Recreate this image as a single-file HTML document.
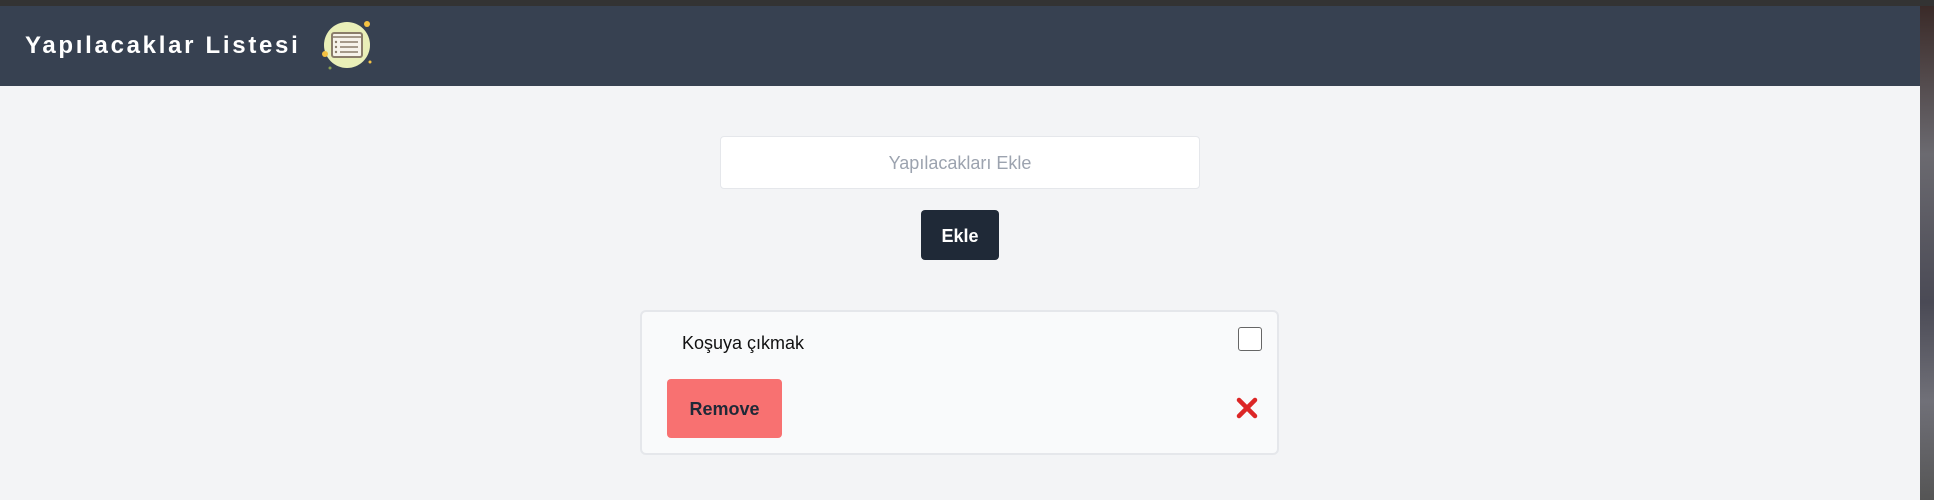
<!DOCTYPE html>
<html><head><meta charset="utf-8"><style>
*{box-sizing:border-box;margin:0;padding:0}
body{width:1934px;height:500px;overflow:hidden;background:#f3f4f6;font-family:"Liberation Sans",sans-serif;position:relative}
.top{position:absolute;left:0;top:0;width:1934px;height:6px;background:#333}
.hdr{position:absolute;left:0;top:6px;width:1920px;height:80px;background:#374151}
.title{position:absolute;left:25px;top:32px;color:#fff;font-weight:bold;font-size:24px;letter-spacing:2.7px}
.side{position:absolute;left:1920px;top:6px;width:14px;height:494px;background:linear-gradient(#3a2a28,#6b6a70 30%,#4a4a55 60%,#707078 80%,#555)}
.inp{position:absolute;left:720px;top:136px;width:480px;height:53px;background:#fff;border:1px solid #e5e7eb;border-radius:4px;color:#9ca3af;font-size:18px;text-align:center;line-height:53px}
.btn{position:absolute;left:921px;top:210px;width:78px;height:50px;background:#1f2937;border-radius:4px;color:#fff;font-weight:bold;font-size:18px;text-align:center;line-height:52px}
.card{position:absolute;left:640px;top:310px;width:639px;height:145px;background:#f9fafb;border:2px solid #e5e7eb;border-radius:6px}
.item{position:absolute;left:682px;top:333px;font-size:18px;color:#111}
.cb{position:absolute;left:1238px;top:327px;width:24px;height:24px;border:1.5px solid #666;border-radius:3px;background:#fff}
.rm{position:absolute;left:667px;top:379px;width:115px;height:59px;background:#f87171;border-radius:4px;color:#1f2937;font-weight:bold;font-size:18px;text-align:center;line-height:61px}
</style></head><body>
<div class="top"></div>
<div class="hdr"></div>
<div class="title">Yapılacaklar Listesi</div>
<svg style="position:absolute;left:320px;top:18px" width="56" height="56" viewBox="0 0 56 56">
<circle cx="27" cy="27" r="23" fill="#e9efb8"/>
<rect x="12" y="15" width="30" height="24" rx="2" fill="#f6f3ea" stroke="#8a7d6a" stroke-width="2"/>
<line x1="12" y1="19" x2="42" y2="19" stroke="#8a7d6a" stroke-width="1.5"/>
<g stroke="#8a7d6a" stroke-width="1.5"><line x1="20" y1="24" x2="38" y2="24"/><line x1="20" y1="29" x2="38" y2="29"/><line x1="20" y1="34" x2="38" y2="34"/></g>
<g fill="#8a7d6a"><circle cx="16" cy="24" r="1.2"/><circle cx="16" cy="29" r="1.2"/><circle cx="16" cy="34" r="1.2"/></g>
<circle cx="47" cy="6" r="3" fill="#f5c242"/><circle cx="5" cy="36" r="3" fill="#f5c242"/><circle cx="50" cy="44" r="1.5" fill="#f5c242"/><circle cx="10" cy="50" r="1.5" fill="#8aa050"/></svg>
<div class="side"></div>
<div class="inp">Yapılacakları Ekle</div>
<div class="btn">Ekle</div>
<div class="card"></div>
<div class="item">Koşuya çıkmak</div>
<div class="cb"></div>
<div class="rm">Remove</div>
<svg style="position:absolute;left:1236px;top:397px" width="22" height="22" viewBox="0 0 22 22"><path d="M3 3L19 19M19 3L3 19" stroke="#dc2626" stroke-width="4.5" stroke-linecap="round"/></svg>
</body></html>
